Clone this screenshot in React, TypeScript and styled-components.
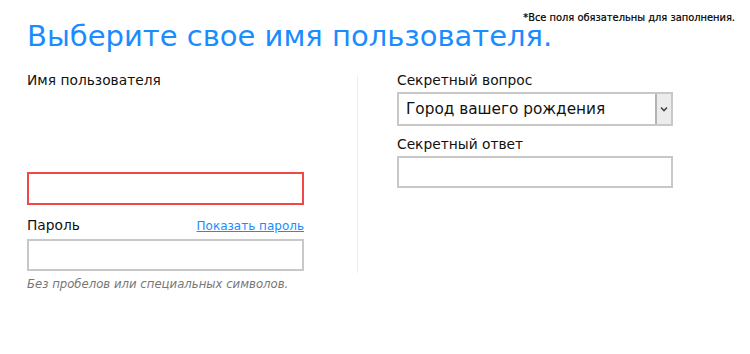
import React from "react";
import styled, { createGlobalStyle } from "styled-components";

const Global = createGlobalStyle`
  html, body {
    margin: 0;
    padding: 0;
    background: #ffffff;
  }
  body {
    font-family: "DejaVu Sans", "Liberation Sans", sans-serif;
    color: #111111;
  }
`;

const Page = styled.main`
  width: 750px;
  height: 354px;
  box-sizing: border-box;
  padding: 0 15px 0 27px;
`;

const Header = styled.header`
  position: relative;
  height: 72px;
`;

const Title = styled.h1`
  margin: 0;
  padding-top: 18px;
  font-size: 29px;
  font-weight: normal;
  line-height: 36px;
  color: #1a8cff;
  white-space: nowrap;
`;

const Required = styled.p`
  position: absolute;
  top: 12px;
  right: 0;
  margin: 0;
  font-size: 9.9px;
  line-height: 12px;
  color: #000000;
  white-space: nowrap;
  -webkit-text-stroke: 0.2px #000;
`;

const Columns = styled.div`
  display: flex;
  align-items: flex-start;
`;

const Column = styled.section<{ $width: number }>`
  display: flex;
  flex-direction: column;
  width: ${(p) => p.$width}px;
`;

const Divider = styled.div`
  width: 1px;
  height: 198px;
  margin: 3px 39px 0 53px;
  background: #eeeeee;
`;

const LabelRow = styled.div<{ $top?: number; $bottom?: number }>`
  display: flex;
  justify-content: space-between;
  align-items: baseline;
  margin-top: ${(p) => p.$top ?? 0}px;
  margin-bottom: ${(p) => p.$bottom ?? 5}px;
`;

const Label = styled.label`
  font-size: 13.8px;
  line-height: 16px;
  color: #111111;
`;

const ShowLink = styled.a`
  font-size: 12px;
  line-height: 16px;
  color: #1a8cff;
  text-decoration: underline;
  cursor: pointer;
`;

const Input = styled.input<{ $error?: boolean }>`
  box-sizing: border-box;
  width: 100%;
  height: ${(p) => (p.$error ? 33 : 32)}px;
  margin: 0;
  padding: 0 8px;
  border: ${(p) => (p.$error ? "2px solid #f04848" : "2px solid #c8c8c8")};
  background: #ffffff;
  font-family: inherit;
  font-size: 14px;
  outline: none;
`;

const Hint = styled.p`
  margin: 6px 0 0;
  font-size: 11.7px;
  line-height: 14px;
  font-style: italic;
  color: #777777;
`;

const Select = styled.div`
  display: flex;
  box-sizing: border-box;
  height: 34px;
  border: 2px solid #c8c8c8;
`;

const SelectValue = styled.span`
  flex: 1;
  padding-left: 7px;
  font-size: 15.3px;
  line-height: 30px;
  color: #111111;
`;

const SelectButton = styled.span`
  display: flex;
  align-items: center;
  justify-content: center;
  width: 14px;
  border-left: 2px solid #b4b4b4;
  background: #ececec;
`;

export default function App() {
  return (
    <Page>
      <Global />
      <Header>
        <Title>Выберите свое имя пользователя.</Title>
        <Required>*Все поля обязательны для заполнения.</Required>
      </Header>

      <Columns>
        <Column $width={277}>
          <LabelRow $bottom={84}>
            <Label>Имя пользователя</Label>
          </LabelRow>
          <Input $error aria-label="Имя пользователя" />
          <LabelRow $top={12} $bottom={5}>
            <Label>Пароль</Label>
            <ShowLink>Показать пароль</ShowLink>
          </LabelRow>
          <Input type="password" aria-label="Пароль" />
          <Hint>Без пробелов или специальных символов.</Hint>
        </Column>

        <Divider />

        <Column $width={276}>
          <LabelRow $bottom={4}>
            <Label>Секретный вопрос</Label>
          </LabelRow>
          <Select>
            <SelectValue>Город вашего рождения</SelectValue>
            <SelectButton>
              <svg width="8" height="6" viewBox="0 0 8 6">
                <path d="M1 1.5 L4 4.5 L7 1.5" fill="none" stroke="#444" strokeWidth="1.6" />
              </svg>
            </SelectButton>
          </Select>
          <LabelRow $top={10} $bottom={4}>
            <Label>Секретный ответ</Label>
          </LabelRow>
          <Input aria-label="Секретный ответ" />
        </Column>
      </Columns>
    </Page>
  );
}
